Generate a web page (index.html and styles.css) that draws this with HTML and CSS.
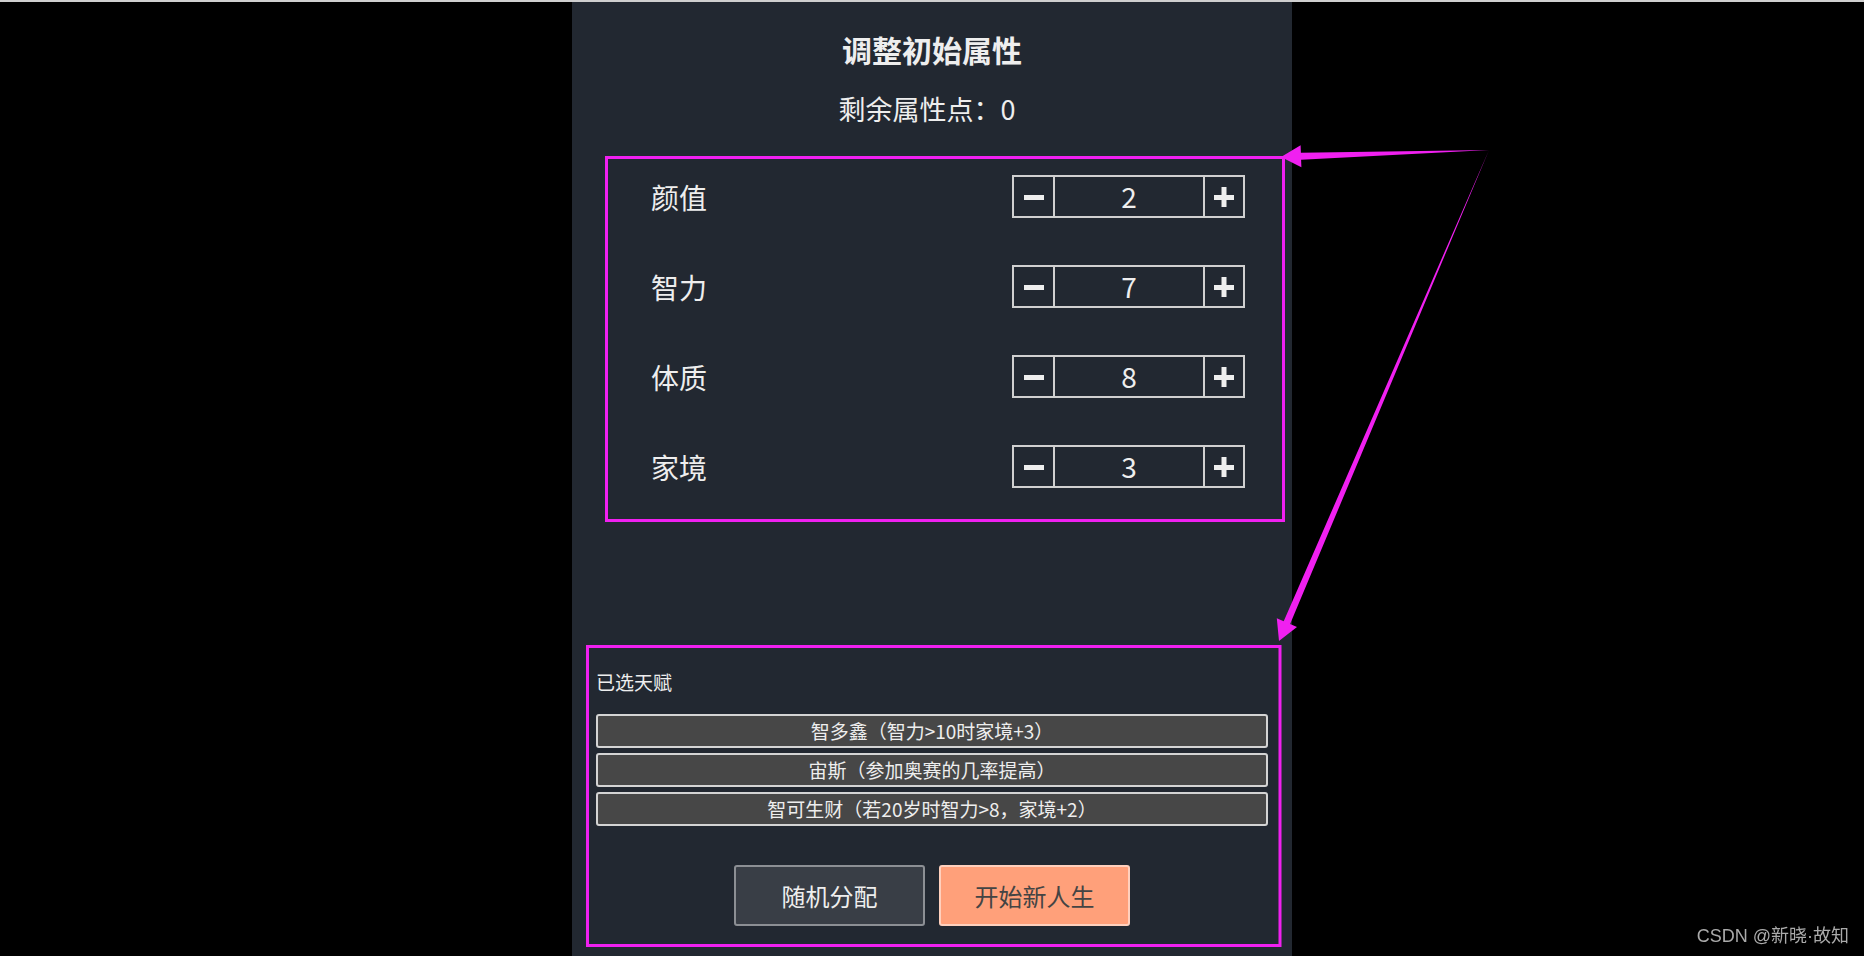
FILE: index.html
```html
<!DOCTYPE html>
<html>
<head>
    <meta charset="UTF-8">
    <title>调整初始属性</title>
    <link rel="stylesheet" href="styles.css">
</head>
<body>
    <div class="panel">
        <h1 class="title">调整初始属性</h1>
        <div class="points">剩余属性点：0</div>

        <ul class="attrs">
            <li class="attr">
                <span class="attr-name">颜值</span>
                <div class="stepper">
                    <button class="step minus"><svg width="20" height="20" viewBox="0 0 20 20"><rect x="0" y="8" width="20" height="5"/></svg></button>
                    <span class="value">2</span>
                    <button class="step plus"><svg width="20" height="20" viewBox="0 0 20 20"><rect x="0" y="8" width="20" height="5"/><rect x="7.5" y="0" width="5" height="20"/></svg></button>
                </div>
            </li>
            <li class="attr">
                <span class="attr-name">智力</span>
                <div class="stepper">
                    <button class="step minus"><svg width="20" height="20" viewBox="0 0 20 20"><rect x="0" y="8" width="20" height="5"/></svg></button>
                    <span class="value">7</span>
                    <button class="step plus"><svg width="20" height="20" viewBox="0 0 20 20"><rect x="0" y="8" width="20" height="5"/><rect x="7.5" y="0" width="5" height="20"/></svg></button>
                </div>
            </li>
            <li class="attr">
                <span class="attr-name">体质</span>
                <div class="stepper">
                    <button class="step minus"><svg width="20" height="20" viewBox="0 0 20 20"><rect x="0" y="8" width="20" height="5"/></svg></button>
                    <span class="value">8</span>
                    <button class="step plus"><svg width="20" height="20" viewBox="0 0 20 20"><rect x="0" y="8" width="20" height="5"/><rect x="7.5" y="0" width="5" height="20"/></svg></button>
                </div>
            </li>
            <li class="attr">
                <span class="attr-name">家境</span>
                <div class="stepper">
                    <button class="step minus"><svg width="20" height="20" viewBox="0 0 20 20"><rect x="0" y="8" width="20" height="5"/></svg></button>
                    <span class="value">3</span>
                    <button class="step plus"><svg width="20" height="20" viewBox="0 0 20 20"><rect x="0" y="8" width="20" height="5"/><rect x="7.5" y="0" width="5" height="20"/></svg></button>
                </div>
            </li>
        </ul>

        <div class="talents">
            <div class="talents-title">已选天赋</div>
            <ul class="talent-list">
                <li class="talent">智多鑫（智力&gt;10时家境+3）</li>
                <li class="talent">宙斯（参加奥赛的几率提高）</li>
                <li class="talent">智可生财（若20岁时智力&gt;8，家境+2）</li>
            </ul>
            <div class="actions">
                <button class="btn btn-random">随机分配</button>
                <button class="btn btn-start">开始新人生</button>
            </div>
        </div>
    </div>

    <div class="watermark">CSDN @新晓·故知</div>

    <!-- annotation marks drawn over the screenshot -->
    <svg class="marks" width="1864" height="956" viewBox="0 0 1864 956">
        <rect x="606.5" y="157.5" width="677" height="363" fill="none" stroke="#f020f0" stroke-width="3"/>
        <rect x="587.5" y="646.5" width="692.5" height="299" fill="none" stroke="#f020f0" stroke-width="3"/>
        <polygon fill="#f020f0" points="1489,150 1300.9,152.8 1300.6,145.3 1281,157 1301.4,167.3 1301.1,159.8"/>
        <polygon fill="#f020f0" points="1489,150 1283.7,621.2 1276.8,618.3 1279,641 1297,626.9 1290.1,624"/>
    </svg>
</body>
</html>
```

FILE: styles.css
```css
body {
    margin: 0;
    background-color: #000;
    border-top: 2px solid #cfcfcf;
    font-family: "Noto Sans CJK SC", "Noto Sans", sans-serif;
    color: #eee;
    overflow: hidden;
}
.panel {
    width: 720px;
    height: 954px;
    margin: 0 auto;
    box-sizing: border-box;
    padding: 27px 0 30px;
    background-color: #222831;
    display: flex;
    flex-direction: column;
}
.title {
    margin: 0;
    font-size: 30px;
    line-height: 40px;
    font-weight: bold;
    text-align: center;
}
.points {
    margin-top: 22px;
    padding-right: 10px;
    font-size: 27px;
    line-height: 36px;
    text-align: center;
}
.attrs {
    list-style: none;
    margin: 48px 0 0;
    padding: 0 47px 0 79px;
    display: flex;
    flex-direction: column;
    gap: 47px;
}
.attr {
    display: flex;
    align-items: center;
    justify-content: space-between;
    height: 43px;
}
.attr-name {
    font-size: 28px;
}
.stepper {
    display: flex;
    width: 233px;
    height: 43px;
    box-sizing: border-box;
    border: 2px solid #d0d0d0;
}
.step {
    width: 41px;
    padding: 0;
    border: none;
    background: none;
    display: flex;
    align-items: center;
    justify-content: center;
    fill: #eee;
    cursor: pointer;
}
.minus {
    border-right: 2px solid #d0d0d0;
}
.plus {
    width: 40px;
    border-left: 2px solid #d0d0d0;
}
.value {
    flex: 1;
    text-align: center;
    font-size: 28px;
    line-height: 39px;
}
.talents {
    margin-top: auto;
    padding: 0 24px;
}
.talents-title {
    font-size: 19px;
    line-height: 24px;
}
.talent-list {
    list-style: none;
    margin: 20px 0 0;
    padding: 0;
    display: flex;
    flex-direction: column;
    gap: 5px;
}
.talent {
    height: 34px;
    box-sizing: border-box;
    border: 2px solid #d4d4d4;
    border-radius: 3px;
    background-color: #474747;
    text-align: center;
    font-size: 19px;
    line-height: 30px;
}
.actions {
    margin-top: 39px;
    display: flex;
    justify-content: center;
    gap: 14px;
}
.btn {
    width: 191px;
    height: 61px;
    font-family: inherit;
    font-size: 24px;
    border: 2px solid;
    border-radius: 3px;
    cursor: pointer;
}
.btn-random {
    background-color: #393e46;
    border-color: #8c8f94;
    color: #eee;
}
.btn-start {
    background-color: #ffa07a;
    border-color: #ffd0bd;
    color: #444;
}
.watermark {
    position: fixed;
    right: 15px;
    bottom: 9px;
    font-family: "Liberation Sans", "Noto Sans CJK SC", sans-serif;
    font-size: 18px;
    color: #aaa;
}
.marks {
    position: fixed;
    top: 0;
    left: 0;
    pointer-events: none;
}
```
